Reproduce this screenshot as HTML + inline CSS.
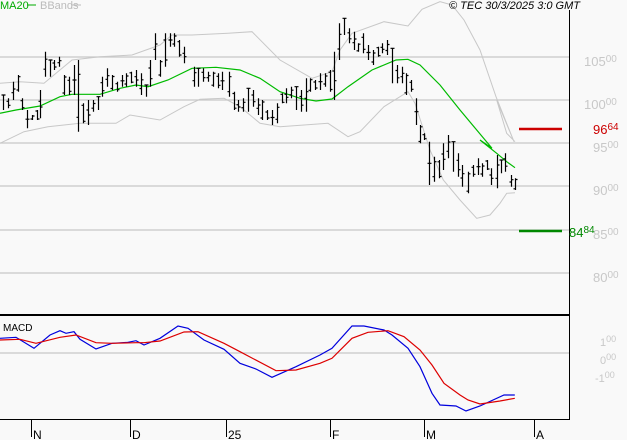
<!DOCTYPE html>
<html><head><meta charset="utf-8"><style>
html,body{margin:0;padding:0;background:#f9f9f9;}
body{width:627px;height:440px;overflow:hidden;position:relative;font-family:"Liberation Sans",sans-serif;}
svg{position:absolute;left:0;top:0;}
.lab{position:absolute;font-size:13px;color:#c8c8c8;}
.lab sup{font-size:10px;vertical-align:4px;margin-left:0px}
</style></head><body>
<svg id="s" width="627" height="440" xmlns="http://www.w3.org/2000/svg">
<g stroke="#c8c8c8" stroke-width="1.3">
<line x1="0" y1="57" x2="569" y2="57"/><line x1="0" y1="100" x2="569" y2="100"/>
<line x1="0" y1="143" x2="569" y2="143"/><line x1="0" y1="186" x2="569" y2="186"/>
<line x1="0" y1="230" x2="569" y2="230"/><line x1="0" y1="273" x2="569" y2="273"/>
<line x1="0" y1="353" x2="569" y2="353"/>
</g>
<g id="g"></g>
<line x1="569.5" y1="10" x2="569.5" y2="420" stroke="#000" stroke-width="1"/>
<line x1="0" y1="315" x2="569" y2="315" stroke="#000" stroke-width="2"/>
<line x1="0" y1="419.5" x2="569" y2="419.5" stroke="#000" stroke-width="1"/>
<g stroke="#000" stroke-width="1">
<line x1="31.5" y1="420" x2="31.5" y2="437"/><line x1="130.5" y1="420" x2="130.5" y2="437"/>
<line x1="226.5" y1="420" x2="226.5" y2="437"/><line x1="330.5" y1="420" x2="330.5" y2="437"/>
<line x1="424.5" y1="420" x2="424.5" y2="437"/><line x1="534.5" y1="420" x2="534.5" y2="437"/>
</g>
<line x1="519" y1="129" x2="562" y2="129" stroke="#cc0000" stroke-width="2.5"/>
<line x1="519" y1="231" x2="562" y2="231" stroke="#008800" stroke-width="2.5"/>
<g font-family="Liberation Sans, sans-serif" font-size="12" fill="#000">
<text x="33" y="439">N</text><text x="132" y="439">D</text><text x="228" y="439">25</text>
<text x="332" y="439">F</text><text x="426" y="439">M</text><text x="536" y="439">A</text>
<text x="3" y="331" font-size="10">MACD</text>
</g>
<g font-family="Liberation Sans, sans-serif" font-size="11">
<text x="0" y="9" fill="#00aa00">MA20</text>
<line x1="27" y1="5" x2="36" y2="5" stroke="#00aa00"/>
<text x="40" y="9" fill="#bbb">BBands</text>
<line x1="72" y1="5" x2="81" y2="5" stroke="#bbb"/>
<text x="449" y="9" fill="#000" font-style="italic">© TEC 30/3/2025 3:0 GMT</text>
</g>
</svg>
<div class="lab" style="left:584px;top:54px">105<sup>00</sup></div>
<div class="lab" style="left:584px;top:97px">100<sup>00</sup></div>
<div class="lab" style="left:593px;top:140px">95<sup>00</sup></div>
<div class="lab" style="left:593px;top:183px">90<sup>00</sup></div>
<div class="lab" style="left:593px;top:227px">85<sup>00</sup></div>
<div class="lab" style="left:593px;top:270px">80<sup>00</sup></div>
<div class="lab" style="left:593px;top:122px;color:#cc0000">96<sup>64</sup></div>
<div class="lab" style="left:569px;top:225px;color:#008800">84<sup>84</sup></div>
<div class="lab" style="left:600px;top:334px;font-size:11px">1<sup style="font-size:9px">00</sup></div>
<div class="lab" style="left:600px;top:352px;font-size:11px">0<sup style="font-size:9px">00</sup></div>
<div class="lab" style="left:595px;top:370px;font-size:11px">-1<sup style="font-size:9px">00</sup></div>
<script>
var NS="http://www.w3.org/2000/svg",g=document.getElementById("g");
function A(x){return x/2.5}function B(y){return y/3}
function line(pts,c,w){var p=document.createElementNS(NS,"polyline");p.setAttribute("points",pts.map(function(q){return q[0].toFixed(1)+","+q[1].toFixed(1)}).join(" "));p.setAttribute("fill","none");p.setAttribute("stroke",c);p.setAttribute("stroke-width",w);g.appendChild(p);}
function z1(a){return a.map(function(q){return[A(q[0]),B(q[1])]})}
function z2(a){return a.map(function(q){return[q[0]/3+400,q[1]/3+100]})}
function z3(a){return a.map(function(q){return[A(q[0]),q[1]/3+300]})}
line(z1([[0,250],[50,245],[110,250],[180,180],[250,170],[330,165],[400,135],[430,105],[480,105],[570,100],[630,95],[700,180],[780,235],[830,215],[850,150],[880,100],[960,65],[1020,78],[1055,28],[1100,5],[1130,15],[1160,60],[1200,150],[1240,290],[1285,425]]).concat(z2([[290,0],[320,100],[345,125]])),"#c8c8c8",1);
line(z1([[0,430],[60,395],[120,380],[200,370],[290,370],[325,345],[400,360],[460,320],[500,298],[560,295],[600,320],[650,370],[700,380],[820,370],[870,410],[900,395],[960,320],[1020,275]]).concat(z2([[45,10],[90,150],[130,240],[180,300],[230,355],[270,345],[300,310],[320,280],[345,278]])),"#c8c8c8",1);
line(z1([[0,340],[40,330],[100,318],[150,290],[180,283],[250,283],[300,265],[340,255],[370,260],[420,240],[480,205],[540,202],[600,210],[650,235],[700,275],[750,295],[790,303],[830,297],[870,260],[930,210],[990,180],[1020,178],[1050,195],[1100,255],[1150,330],[1230,445]]).concat(z2([[240,120],[290,160],[320,185],[345,203]])),"#00bb00",1.2);
var b1=[[8,285,330],[20,295,325],[32,245,300],[44,225,275],[56,295,330],[68,330,385],[80,345,360],[92,330,360],[100,270,355],[112,155,230],[124,180,230],[136,180,210],[148,170,200],[160,225,285],[172,230,285],[184,195,285],[196,180,395],[208,310,370],[220,300,375],[232,300,335],[244,290,330],[256,230,290],[268,205,260],[280,225,270],[292,245,275],[304,225,260],[316,220,260],[328,215,250],[340,210,260],[352,220,285],[364,255,290],[376,180,260],[388,100,180],[400,180,230],[412,100,200],[424,100,140],[436,100,140],[448,120,170],[460,140,190],[484,200,260],[496,205,260],[508,205,245],[520,215,245],[532,215,260],[544,220,265],[556,215,270],[572,215,290],[584,275,330],[596,300,335],[608,295,335],[620,265,335],[632,270,320],[644,295,345],[656,300,360],[668,330,360],[680,330,375],[692,310,370],[704,280,310],[716,265,310],[728,260,295],[740,260,330],[752,270,335],[764,235,335],[776,235,275],[788,240,270],[800,220,270],[812,220,260],[824,210,275],[836,155,300],[848,70,180],[860,55,105],[872,85,130],[884,95,150],[896,130,155],[908,100,160],[920,135,180],[932,150,195],[944,140,170],[956,130,160],[968,120,165],[980,145,250],[992,195,250],[1004,200,250],[1016,220,285],[1028,240,275],[1040,295,375]];
var d="";
function bar(x,t,b,i){x=Math.round(x)+0.5;var m=t+(b-t)*((i*37%10)/10);var o=t+(b-t)*((i*53%10)/10);d+="M"+x+","+t.toFixed(1)+"V"+b.toFixed(1)+"M"+(x+2)+","+m.toFixed(1)+"H"+x+"M"+(x-2)+","+o.toFixed(1)+"H"+x;}
b1.forEach(function(q,i){bar(A(q[0]),B(q[1]),B(q[2]),i)});
var b2=[[60,75,130],[72,100,120],[87,125,255],[103,170,245],[118,180,235],[130,130,210],[145,105,175],[160,125,215],[175,160,230],[187,195,260],[203,215,280],[218,195,230],[233,175,225],[245,190,230],[260,180,210],[273,205,255],[290,165,265],[302,180,220],[316,160,215],[332,225,260],[344,235,270]];
b2.forEach(function(q,i){bar(q[0]/3+400,q[1]/3+100,q[2]/3+100,i+3)});
var p=document.createElementNS(NS,"path");p.setAttribute("d",d);p.setAttribute("stroke","#000");p.setAttribute("stroke-width","1.2");p.setAttribute("fill","none");g.appendChild(p);
line(z3([[0,115],[40,112],[85,145],[125,105],[150,92],[165,100],[185,95],[200,118],[240,147],[280,130],[320,127],[340,122],[360,135],[400,115],[445,78],[470,85],[510,120],[560,148],[600,190],[640,207],[680,232],[740,200],[800,165],[830,145],[880,78],[910,78],[960,90],[980,105],[1020,145],[1050,200],[1080,280],[1100,315],[1140,318],[1165,333],[1200,318],[1260,285],[1287,285]]),"#0000dd",1.2);
line(z3([[0,120],[50,118],[90,130],[150,112],[190,105],[240,128],[280,130],[340,128],[360,128],[400,123],[460,96],[495,95],[560,130],[600,155],[690,212],[740,210],[800,190],[830,175],[880,115],[920,97],[970,92],[1010,110],[1050,150],[1080,195],[1110,250],[1150,285],[1170,300],[1200,312],[1250,303],[1287,295]]),"#dd0000",1.2);
</script>
</body></html>
